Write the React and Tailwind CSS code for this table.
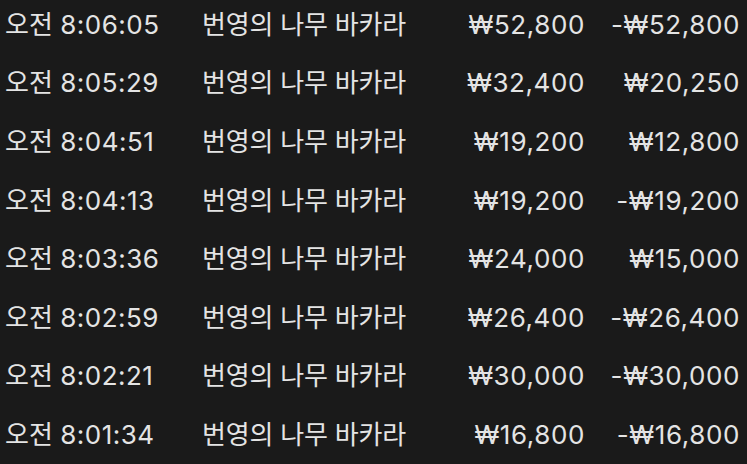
const rows = [
  { time: "8:06:05", game: "번영의 나무 바카라", bet: "₩52,800", result: "-₩52,800" },
  { time: "8:05:29", game: "번영의 나무 바카라", bet: "₩32,400", result: "₩20,250" },
  { time: "8:04:51", game: "번영의 나무 바카라", bet: "₩19,200", result: "₩12,800" },
  { time: "8:04:13", game: "번영의 나무 바카라", bet: "₩19,200", result: "-₩19,200" },
  { time: "8:03:36", game: "번영의 나무 바카라", bet: "₩24,000", result: "₩15,000" },
  { time: "8:02:59", game: "번영의 나무 바카라", bet: "₩26,400", result: "-₩26,400" },
  { time: "8:02:21", game: "번영의 나무 바카라", bet: "₩30,000", result: "-₩30,000" },
  { time: "8:01:34", game: "번영의 나무 바카라", bet: "₩16,800", result: "-₩16,800" },
];

export default function App() {
  return (
    <div
      className="w-[747px] h-[464px] overflow-hidden bg-[#1a1a1a] text-[#e4e4e4]"
      style={{ fontFamily: '"Inter", "Noto Sans CJK KR", sans-serif' }}
    >
      <div className="-mt-[5px] flex flex-col">
        {rows.map((r, i) => (
          <div key={i} className="flex items-center h-[58.6px] text-[26px] pl-[5px] pr-[7px]">
            <div className="w-[197px] shrink-0 whitespace-nowrap">
              오전 <span className="tracking-[0.5px]">{r.time}</span>
            </div>
            <div className="flex-1 whitespace-nowrap tracking-[-0.2px]">{r.game}</div>
            <div className="w-[170px] text-right whitespace-nowrap tracking-[0.6px]">{r.bet}</div>
            <div className="w-[155px] text-right whitespace-nowrap tracking-[0.6px]">{r.result}</div>
          </div>
        ))}
      </div>
    </div>
  );
}
